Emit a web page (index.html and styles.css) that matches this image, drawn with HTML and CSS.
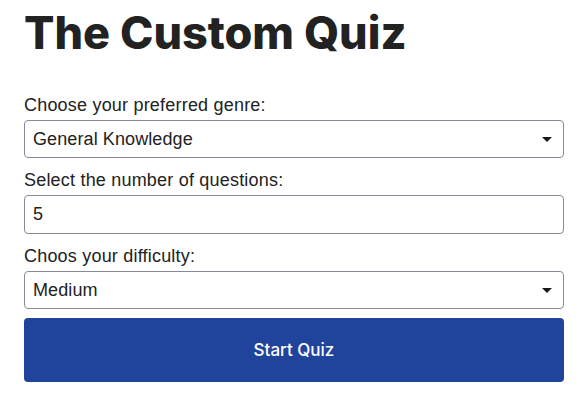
FILE: index.html
```html
<!DOCTYPE html>
<html lang="en">
<head>
<meta charset="utf-8">
<title>The Custom Quiz</title>
<link rel="stylesheet" href="styles.css">
</head>
<body>
<main class="quiz">
  <h1 class="title">The Custom Quiz</h1>
  <form class="form">
    <label class="label" for="genre">Choose your preferred genre:</label>
    <div class="select-wrap">
      <select id="genre" class="control">
        <option>General Knowledge</option>
      </select>
    </div>
    <label class="label" for="count">Select the number of questions:</label>
    <input id="count" class="control" type="text" value="5">
    <label class="label" for="difficulty">Choos your difficulty:</label>
    <div class="select-wrap">
      <select id="difficulty" class="control">
        <option>Medium</option>
      </select>
    </div>
    <button type="button" class="start">Start Quiz</button>
  </form>
</main>
</body>
</html>
```

FILE: styles.css
```css
* { box-sizing: border-box; }
html, body { margin: 0; background: #fff; }
body { padding: 0 20px 0 24px; }
.quiz { width: 540px; }
.title {
  font-family: Inter, "Noto Sans", sans-serif;
  font-weight: 800;
  font-size: 45px;
  line-height: 56px;
  color: #222;
  margin: 5px 0 0 0;
}
.form {
  display: flex;
  flex-direction: column;
  margin-top: 31px;
}
.label {
  font-family: "Liberation Sans", Arial, sans-serif;
  font-size: 18px;
  line-height: 27px;
  letter-spacing: 0.2px;
  color: #222;
  margin-bottom: 1px;
}
.select-wrap { position: relative; }
.select-wrap::after {
  content: "";
  position: absolute;
  right: 12px;
  top: 17px;
  border-left: 5px solid transparent;
  border-right: 5px solid transparent;
  border-top: 5px solid #1a1a1a;
  pointer-events: none;
}
.control {
  display: block;
  width: 100%;
  height: 38px;
  margin: 0 0 9px 0;
  padding: 0 30px 0 8px;
  border: 1px solid #868aa0;
  border-radius: 4px;
  background: #fff;
  font-family: "Liberation Sans", Arial, sans-serif;
  font-size: 18px;
  letter-spacing: 0.1px;
  color: #222;
  -webkit-appearance: none;
  appearance: none;
  outline: none;
}
input.control { height: 39px; }
.start {
  height: 64px;
  width: 100%;
  border: none;
  border-radius: 4px;
  background: #20449c;
  color: #fff;
  font-family: Inter, "Noto Sans", sans-serif;
  font-size: 17px;
  font-weight: 500;
}
```
